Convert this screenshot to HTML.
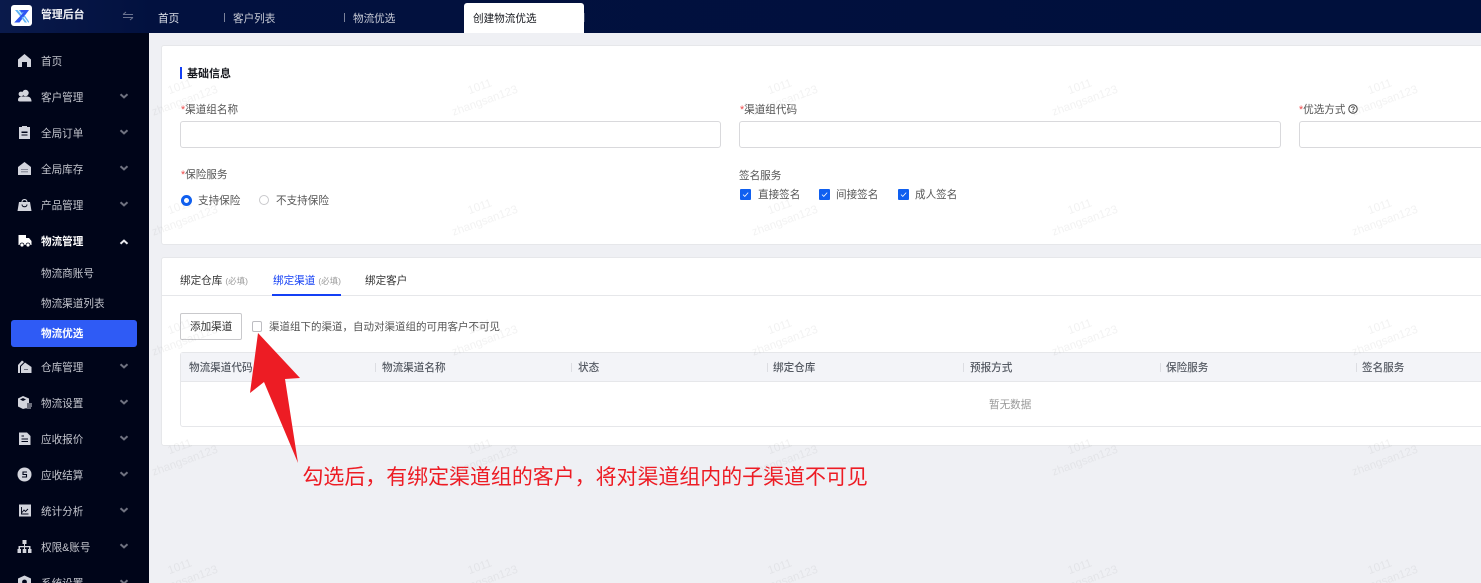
<!DOCTYPE html>
<html lang="zh-CN">
<head>
<meta charset="utf-8">
<title>管理后台</title>
<style>
html,body{margin:0;padding:0;width:1481px;height:583px;overflow:hidden;background:#eff0f4;}
body{position:relative;font-family:"Liberation Sans","Noto Sans CJK SC",sans-serif;font-size:10.6px;color:#555;}
.a{position:absolute;white-space:nowrap;line-height:14px;}
.box{position:absolute;box-sizing:border-box;}
.m{position:absolute;left:41px;color:#c4c6ce;line-height:14px;white-space:nowrap;}
.i{position:absolute;left:17px;width:15px;height:15px;}
.c{position:absolute;left:119px;width:10px;height:6px;}
.sep{position:absolute;width:1px;height:9px;top:363px;background:#dcdde2;}
.th{position:absolute;top:361px;line-height:14px;color:#555a63;white-space:nowrap;font-weight:500;}
.inp{position:absolute;top:121px;height:27px;box-sizing:border-box;background:#fff;border:1px solid #d9d9dc;border-radius:3px;}
.cb{position:absolute;top:189px;width:11px;height:11px;background:#0f5ff0;border-radius:1px;}
</style>
</head>
<body>

<!-- cards -->
<div class="box" style="left:161px;top:45px;width:1340px;height:200px;background:#fff;border:1px solid #e6e7ea;border-radius:3px;"></div>
<div class="box" style="left:161px;top:257px;width:1340px;height:189px;background:#fff;border:1px solid #e6e7ea;border-radius:3px;"></div>

<!-- card 1 -->
<div class="box" style="left:180px;top:67px;width:2px;height:12px;background:#1440f5;"></div>
<div class="a" style="left:187px;top:67px;color:#17191f;font-weight:700;font-size:11px;">基础信息</div>

<div class="a" style="left:181px;top:103px;"><span style="color:#ee4a4a;">*</span>渠道组名称</div>
<div class="a" style="left:740px;top:103px;"><span style="color:#ee4a4a;">*</span>渠道组代码</div>
<div class="a" style="left:1299px;top:103px;"><span style="color:#ee4a4a;">*</span>优选方式</div>
<svg class="box" style="left:1348px;top:104px;" width="10" height="10" viewBox="0 0 10 10"><circle cx="5" cy="5" r="4.2" fill="none" stroke="#444" stroke-width="1"/><path d="M3.6 4C3.7 2.4 6.4 2.4 6.4 4C6.4 5 5 5 5 6.2" fill="none" stroke="#444" stroke-width=".9"/><circle cx="5" cy="7.5" r=".6" fill="#444"/></svg>

<div class="inp" style="left:180px;width:541px;"></div>
<div class="inp" style="left:739px;width:542px;"></div>
<div class="inp" style="left:1299px;width:200px;"></div>

<div class="a" style="left:181px;top:168px;"><span style="color:#ee4a4a;">*</span>保险服务</div>
<div class="box" style="left:181px;top:195px;width:11px;height:11px;border-radius:50%;border:3px solid #0f5ff0;background:#fff;"></div>
<div class="a" style="left:198px;top:194px;">支持保险</div>
<div class="box" style="left:259px;top:195px;width:10px;height:10px;border-radius:50%;border:1px solid #c9c9cc;background:#fff;"></div>
<div class="a" style="left:276px;top:194px;">不支持保险</div>

<div class="a" style="left:739px;top:169px;">签名服务</div>
<div class="cb" style="left:740px;"><svg width="11" height="11" viewBox="0 0 11 11" style="display:block"><path d="M3 5.6L4.8 7.4L8.2 3.6" fill="none" stroke="#fff" stroke-width=".8"/></svg></div>
<div class="a" style="left:758px;top:188px;">直接签名</div>
<div class="cb" style="left:819px;"><svg width="11" height="11" viewBox="0 0 11 11" style="display:block"><path d="M3 5.6L4.8 7.4L8.2 3.6" fill="none" stroke="#fff" stroke-width=".8"/></svg></div>
<div class="a" style="left:836px;top:188px;">间接签名</div>
<div class="cb" style="left:898px;"><svg width="11" height="11" viewBox="0 0 11 11" style="display:block"><path d="M3 5.6L4.8 7.4L8.2 3.6" fill="none" stroke="#fff" stroke-width=".8"/></svg></div>
<div class="a" style="left:915px;top:188px;">成人签名</div>

<!-- tabs -->
<div class="box" style="left:162px;top:295px;width:1319px;height:1px;background:#e6e7ea;"></div>
<div class="a" style="left:180px;top:274px;color:#333;">绑定仓库 <span style="font-size:8.5px;color:#999;">(必填)</span></div>
<div class="a" style="left:273px;top:274px;color:#1440f5;">绑定渠道 <span style="font-size:8.5px;color:#999;">(必填)</span></div>
<div class="box" style="left:272px;top:294px;width:69px;height:2px;background:#1440f5;"></div>
<div class="a" style="left:365px;top:274px;color:#333;">绑定客户</div>

<div class="box" style="left:180px;top:313px;width:62px;height:27px;background:#fff;border:1px solid #c9c9cc;border-radius:2px;"></div>
<div class="a" style="left:190px;top:320px;color:#333;">添加渠道</div>
<div class="box" style="left:252px;top:321px;width:10px;height:11px;background:#fff;border:1px solid #bdbdc2;border-radius:2px;"></div>
<div class="a" style="left:269px;top:320px;font-size:10.5px;">渠道组下的渠道，自动对渠道组的可用客户不可见</div>

<!-- table -->
<div class="box" style="left:180px;top:352px;width:1320px;height:75px;background:#fff;border:1px solid #e6e7ea;border-radius:3px;"></div>
<div class="box" style="left:181px;top:353px;width:1300px;height:29px;background:#f3f4f8;border-bottom:1px solid #e6e7ea;"></div>
<div class="th" style="left:189px;">物流渠道代码</div>
<div class="sep" style="left:375px;"></div><div class="th" style="left:382px;">物流渠道名称</div>
<div class="sep" style="left:571px;"></div><div class="th" style="left:578px;">状态</div>
<div class="sep" style="left:767px;"></div><div class="th" style="left:773px;">绑定仓库</div>
<div class="sep" style="left:963px;"></div><div class="th" style="left:970px;">预报方式</div>
<div class="sep" style="left:1160px;"></div><div class="th" style="left:1166px;">保险服务</div>
<div class="sep" style="left:1356px;"></div><div class="th" style="left:1362px;">签名服务</div>
<div class="a" style="left:989px;top:398px;color:#999;">暂无数据</div>

<!-- watermark -->
<svg class="box" style="left:0;top:0;pointer-events:none;" width="1481" height="583" viewBox="0 0 1481 583">
<defs>
<pattern id="wm" patternUnits="userSpaceOnUse" x="30" y="25" width="300" height="120">
<g fill="#000" fill-opacity=".05" font-family="Liberation Sans, sans-serif" font-size="11.5" text-anchor="middle">
<text transform="translate(151,65) rotate(-20)">1011</text>
<text transform="translate(156,79) rotate(-20)">zhangsan123</text>
</g>
</pattern>
</defs>
<rect x="149" y="33" width="1332" height="550" fill="url(#wm)"/>
</svg>

<!-- top bar -->
<div class="box" style="left:0;top:0;width:1481px;height:33px;background:linear-gradient(90deg,#0a1a4b 0,#02113f 150px,#00103c 100%);"></div>
<div class="box" style="left:11px;top:5px;width:21px;height:21px;background:#fff;border-radius:3px;"></div>
<svg class="box" style="left:11px;top:5px;" width="21" height="21" viewBox="0 0 21 21">
<path d="M4 5H6.5L11 10.5L9.8 12ZM7.5 5H9.5L12 8L11 9.2Z" fill="#5fb4f7"/>
<path d="M9 5H18L8.5 17.5H3.2L12.5 7.5H10.5Z" fill="#2f56f2"/>
<path d="M11.5 11.5L16 17.5H13.8L10.5 13ZM13.5 10L18 16.5V17.5H17.2L12.6 11.2Z" fill="#5fb4f7"/>
</svg>
<div class="a" style="left:41px;top:8px;color:#f2f3f7;font-weight:700;font-size:10.9px;">管理后台</div>
<svg class="box" style="left:122px;top:11px;" width="12" height="10" viewBox="0 0 12 10"><path d="M1 3.5H11M1 3.5L4 1M1 6.5H11M11 6.5L8 9" fill="none" stroke="#6b7390" stroke-width="1"/></svg>

<div class="a" style="left:158px;top:12px;color:#dfe2ea;">首页</div>
<div class="box" style="left:224px;top:13px;width:1px;height:9px;background:#7b829a;"></div>
<div class="a" style="left:233px;top:12px;color:#c9ccd6;">客户列表</div>
<div class="box" style="left:344px;top:13px;width:1px;height:9px;background:#7b829a;"></div>
<div class="a" style="left:353px;top:12px;color:#c9ccd6;">物流优选</div>
<div class="box" style="left:464px;top:3px;width:120px;height:30px;background:#fff;border-radius:3px 3px 0 0;"></div>
<div class="box" style="left:584px;top:13px;width:1px;height:9px;background:#3a4566;"></div>
<div class="a" style="left:473px;top:12px;color:#17191f;">创建物流优选</div>

<!-- sidebar -->
<div class="box" style="left:0;top:33px;width:149px;height:550px;background:#000519;"></div>

<svg class="i" style="top:53px;" viewBox="0 0 15 15"><path d="M7.5 1L14 6.5V14H10V9H5V14H1V6.5Z" fill="#d3d5dd"/></svg>
<div class="m" style="top:55px;">首页</div>

<svg class="i" style="top:89px;" viewBox="0 0 15 15"><circle cx="8.5" cy="4" r="3.2" fill="#d3d5dd"/><circle cx="4" cy="5" r="2.4" fill="#d3d5dd"/><path d="M1 11C1 8.5 3 7.5 5 7.5H10C13 7.5 14.5 9.5 14.5 12.5H3C1.5 12.5 1 12 1 11Z" fill="#d3d5dd"/></svg>
<div class="m" style="top:91px;">客户管理</div>

<svg class="i" style="top:125px;" viewBox="0 0 15 15"><path d="M2 2H5V1H10V2H13V14H2Z" fill="#d3d5dd"/><path d="M4.5 6.5H10.5V8H4.5ZM4.5 9.5H10.5V10.5H4.5Z" fill="#000519"/></svg>
<div class="m" style="top:127px;">全局订单</div>

<svg class="i" style="top:161px;" viewBox="0 0 15 15"><path d="M7.5 1L14 6V14H1V6Z" fill="#d3d5dd"/><path d="M4 8.5H11M4 10.8H11" stroke="#6d7080" stroke-width=".8"/></svg>
<div class="m" style="top:163px;">全局库存</div>

<svg class="i" style="top:197px;" viewBox="0 0 15 15"><path d="M2 5H4.5C4.5 1 10.5 1 10.5 5H13L14.5 14H.5Z" fill="#d3d5dd"/><path d="M5 7.5C5 10.5 10 10.5 10 7.5" fill="none" stroke="#000519" stroke-width="1"/><path d="M5.5 5C5.5 2.5 9.5 2.5 9.5 5Z" fill="#000519"/></svg>
<div class="m" style="top:199px;">产品管理</div>

<svg class="i" style="top:233px;" viewBox="0 0 15 15"><path d="M1.5 2H9V5H12L14.5 8V12H1.5Z" fill="#fff"/><circle cx="5" cy="12" r="2" fill="#fff" stroke="#000519" stroke-width=".8"/><circle cx="11" cy="12" r="2" fill="#fff" stroke="#000519" stroke-width=".8"/></svg>
<div class="m" style="top:235px;color:#fff;font-weight:700;">物流管理</div>
<div class="m" style="top:267px;">物流商账号</div>
<div class="m" style="top:297px;">物流渠道列表</div>
<div class="box" style="left:11px;top:320px;width:126px;height:27px;background:#2f5bf5;border-radius:3px;"></div>
<div class="m" style="top:327px;color:#fff;font-weight:700;">物流优选</div>

<svg class="i" style="top:359px;" viewBox="0 0 15 15"><path d="M1 6L5 1.5L7 3L3 7V14H1Z" fill="#d3d5dd"/><path d="M8 3.5L14.5 8V14H4V7.5Z" fill="#d3d5dd"/><path d="M7.5 10.5H11" stroke="#000519" stroke-width="1" stroke-dasharray="1 1"/></svg>
<div class="m" style="top:361px;">仓库管理</div>

<svg class="i" style="top:395px;" viewBox="0 0 15 15"><path d="M6 1L12 3.5V8H10V13L6 14L1 11.5V3.5Z" fill="#d3d5dd"/><path d="M6 3L9 4.5L6 6L3 4.5Z" fill="#000519"/><path d="M10 9H15M10 11H15M9.5 13H14" stroke="#d3d5dd" stroke-width="1"/></svg>
<div class="m" style="top:397px;">物流设置</div>

<svg class="i" style="top:431px;" viewBox="0 0 15 15"><path d="M2 1.5H10L13.5 5V14H2Z" fill="#d3d5dd"/><path d="M4.5 5H7M4.5 8H11M4.5 10.5H11" stroke="#000519" stroke-width="1"/></svg>
<div class="m" style="top:433px;">应收报价</div>

<svg class="i" style="top:467px;" viewBox="0 0 15 15"><circle cx="7.5" cy="7.5" r="7" fill="#d3d5dd"/><path d="M10 5H6V7.5H9.5V10H5" fill="none" stroke="#000519" stroke-width="1.1"/></svg>
<div class="m" style="top:469px;">应收结算</div>

<svg class="i" style="top:503px;" viewBox="0 0 15 15"><path d="M2 1.5H14V13.5H2Z" fill="#d3d5dd"/><path d="M4.5 4V11H11.5M5 9.5L7 7L8.5 8.5L11 6" fill="none" stroke="#000519" stroke-width=".9"/></svg>
<div class="m" style="top:505px;">统计分析</div>

<svg class="i" style="top:539px;" viewBox="0 0 15 15"><path d="M5.5 1H9.5V5H8V7H13.5V10H14.5V14H11V10H12V8.2H8V10H9.3V14H5.7V10H7V8.2H3V10H4V14H.5V10H1.5V7H7V5H5.5Z" fill="#d3d5dd"/></svg>
<div class="m" style="top:541px;">权限&amp;账号</div>

<svg class="i" style="top:575px;" viewBox="0 0 15 15"><path d="M7.5 .5L14 3.5V11L7.5 14.5L1 11V3.5Z" fill="#d3d5dd"/><circle cx="7.5" cy="7" r="2.4" fill="#000519"/></svg>
<div class="m" style="top:577px;">系统设置</div>

<svg class="c" style="top:93px;" viewBox="0 0 10 6"><path d="M1.5 1.2L5 4.4L8.5 1.2" fill="none" stroke="#6f7280" stroke-width="2"/></svg>
<svg class="c" style="top:129px;" viewBox="0 0 10 6"><path d="M1.5 1.2L5 4.4L8.5 1.2" fill="none" stroke="#6f7280" stroke-width="2"/></svg>
<svg class="c" style="top:165px;" viewBox="0 0 10 6"><path d="M1.5 1.2L5 4.4L8.5 1.2" fill="none" stroke="#6f7280" stroke-width="2"/></svg>
<svg class="c" style="top:201px;" viewBox="0 0 10 6"><path d="M1.5 1.2L5 4.4L8.5 1.2" fill="none" stroke="#6f7280" stroke-width="2"/></svg>
<svg class="c" style="top:239px;" viewBox="0 0 10 6"><path d="M1.5 4.8L5 1.6L8.5 4.8" fill="none" stroke="#e8e9ee" stroke-width="2"/></svg>
<svg class="c" style="top:363px;" viewBox="0 0 10 6"><path d="M1.5 1.2L5 4.4L8.5 1.2" fill="none" stroke="#6f7280" stroke-width="2"/></svg>
<svg class="c" style="top:399px;" viewBox="0 0 10 6"><path d="M1.5 1.2L5 4.4L8.5 1.2" fill="none" stroke="#6f7280" stroke-width="2"/></svg>
<svg class="c" style="top:435px;" viewBox="0 0 10 6"><path d="M1.5 1.2L5 4.4L8.5 1.2" fill="none" stroke="#6f7280" stroke-width="2"/></svg>
<svg class="c" style="top:471px;" viewBox="0 0 10 6"><path d="M1.5 1.2L5 4.4L8.5 1.2" fill="none" stroke="#6f7280" stroke-width="2"/></svg>
<svg class="c" style="top:507px;" viewBox="0 0 10 6"><path d="M1.5 1.2L5 4.4L8.5 1.2" fill="none" stroke="#6f7280" stroke-width="2"/></svg>
<svg class="c" style="top:543px;" viewBox="0 0 10 6"><path d="M1.5 1.2L5 4.4L8.5 1.2" fill="none" stroke="#6f7280" stroke-width="2"/></svg>
<svg class="c" style="top:579px;" viewBox="0 0 10 6"><path d="M1.5 1.2L5 4.4L8.5 1.2" fill="none" stroke="#6f7280" stroke-width="2"/></svg>

<!-- annotation -->
<svg class="box" style="left:0;top:0;" width="1481" height="583" viewBox="0 0 1481 583"><path d="M258 333L300 378L285 379L298 463L264 382L250 393Z" fill="#ed1c24"/></svg>
<div class="a" style="left:302.5px;top:463px;color:#ed1c24;font-size:20.95px;line-height:30px;">勾选后，有绑定渠道组的客户，将对渠道组内的子渠道不可见</div>

</body>
</html>
